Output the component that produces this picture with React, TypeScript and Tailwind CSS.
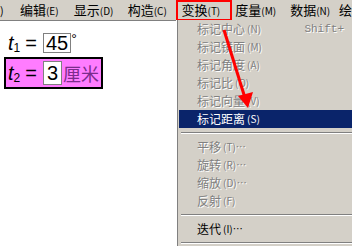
import React from "react"

const topMenus = [
  { label: "编辑", key: "E" },
  { label: "显示", key: "D" },
  { label: "构造", key: "C" },
]

const cjk = { fontFamily: '"Noto Sans CJK SC", "Liberation Sans", sans-serif' }

function Item({
  label,
  hot,
  dots,
  disabled,
  active,
  shortcut,
}: {
  label: string
  hot: string
  dots?: boolean
  disabled?: boolean
  active?: boolean
  shortcut?: string
}) {
  const color = active ? "text-white" : disabled ? "text-[#808080]" : "text-black"
  const shadow = disabled ? "[text-shadow:1px_1px_0_#ffffff]" : ""
  return (
    <div
      className={`flex h-[18px] items-center pl-[18px] pr-2 text-[12px] leading-none ${color} ${shadow} ${
        active ? "bg-[#0a246a]" : ""
      }`}
    >
      <span>{label}</span>
      <span className="ml-[2px] text-[10px]">({hot})</span>
      {dots && <span className="text-[10px]">…</span>}
      {shortcut && (
        <span className="ml-auto font-['Liberation_Mono',monospace] text-[11px]">{shortcut}</span>
      )}
    </div>
  )
}

function Sep() {
  return (
    <div className="my-[4px] ml-[2px] h-[2px] border-t border-[#808080] border-b border-b-white" />
  )
}

export default function App() {
  return (
    <div className="relative h-[246px] w-[352px] overflow-hidden bg-white" style={cjk}>
      <div className="flex h-[21px] items-center border-b border-[#808080] bg-[#d4d0c8] text-[13px] text-black">
        <span className="w-[14px] text-[11px]">)</span>
        {topMenus.map((m) => (
          <div key={m.key} className="flex w-[54px] items-center pl-[6px]">
            <span>{m.label}</span>
            <span className="text-[10px]">({m.key})</span>
          </div>
        ))}
        <div className="ml-[1px] flex h-[21px] w-[56px] items-center border-2 border-[#ff0000] pl-[3px]">
          <span>变换</span>
          <span className="text-[10px]">(T)</span>
        </div>
        <div className="flex w-[55px] items-center pl-[3px]">
          <span>度量</span>
          <span className="text-[10px]">(M)</span>
        </div>
        <div className="flex w-[52px] items-center pl-[3px]">
          <span>数据</span>
          <span className="text-[10px]">(N)</span>
        </div>
        <span>绘</span>
      </div>

      <div className="flex flex-col gap-[4px] pl-[4px] pt-[12px]">
        <div className="flex h-[20px] items-center pl-[4px] font-['Liberation_Sans',sans-serif] text-[20px] leading-none text-black">
          <span className="italic">t</span>
          <span className="mt-[9px] text-[12px]">1</span>
          <span className="ml-[5px] mr-[6px]">=</span>
          <span className="flex h-[20px] items-center border border-[#808080] px-[2px] leading-none">45</span>
          <span className="-mt-[8px] text-[14px]">°</span>
        </div>
        <div className="flex h-[32px] w-[99px] items-center border-2 border-black bg-[#ff7cff] pl-[2px] font-['Liberation_Sans',sans-serif] text-[20px] leading-none text-black">
          <span className="italic">t</span>
          <span className="mt-[9px] text-[12px]">2</span>
          <span className="ml-[5px] mr-[6px]">=</span>
          <span className="flex h-[24px] items-center border border-[#808080] bg-white px-[3px] leading-none">3</span>
          <span className="ml-[1px] text-[18px] text-[#7b2c8c]" style={cjk}>厘米</span>
        </div>
      </div>

      <div className="absolute left-[176px] top-[20px] h-[226px] w-[176px] border-l border-l-[#ffffff] bg-[#d4d0c8] pl-[2px] shadow-[inset_1px_0_0_#808080]">
        <Item label="标记中心" hot="N" disabled shortcut="Shift+" />
        <Item label="标记镜面" hot="M" disabled />
        <Item label="标记角度" hot="A" disabled />
        <Item label="标记比" hot="O" disabled />
        <Item label="标记向量" hot="V" disabled />
        <Item label="标记距离" hot="S" active />
        <Sep />
        <Item label="平移" hot="T" dots disabled />
        <Item label="旋转" hot="R" dots disabled />
        <Item label="缩放" hot="D" dots disabled />
        <Item label="反射" hot="F" disabled />
        <Sep />
        <Item label="迭代" hot="I" dots />
        <Sep />
      </div>

      <svg className="absolute left-0 top-0" width="352" height="246">
        <line x1="224" y1="30" x2="245" y2="98" stroke="#ff0000" strokeWidth="3" />
        <polygon points="248,108 238,96 253,92" fill="#ff0000" />
      </svg>
    </div>
  )
}
